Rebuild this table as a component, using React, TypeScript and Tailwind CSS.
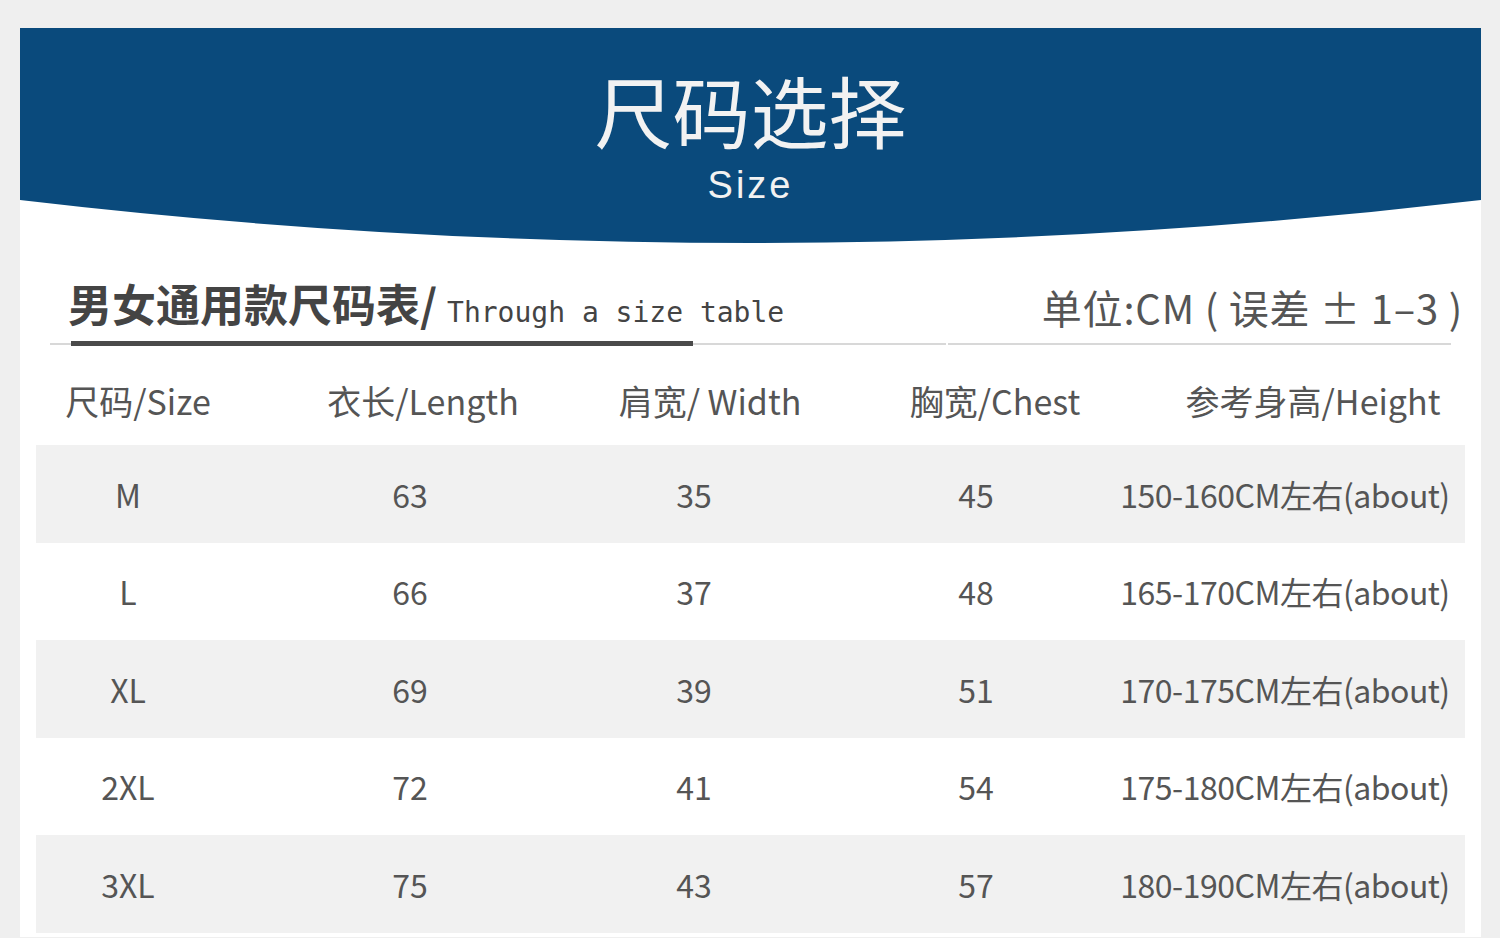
const cjk = "font-['Noto_Sans_CJK_SC',sans-serif]";

const rows = [
  { size: "M", length: "63", width: "35", chest: "45", height: "150-160" },
  { size: "L", length: "66", width: "37", chest: "48", height: "165-170" },
  { size: "XL", length: "69", width: "39", chest: "51", height: "170-175" },
  { size: "2XL", length: "72", width: "41", chest: "54", height: "175-180" },
  { size: "3XL", length: "75", width: "43", chest: "57", height: "180-190" },
];

const dataCols = "grid grid-cols-[184px_380px_188px_376px_242px]";
const headCols = "grid grid-cols-[204px_366px_208px_362px_274px]";

function Banner() {
  return (
    <div className="relative h-[215px]">
      <svg className="absolute inset-0" width="1461" height="215" viewBox="0 0 1461 215">
        <path d="M0 0 H1461 V172 Q730 258 0 172 Z" fill="#0a4a7c" />
      </svg>
      <div className="relative flex flex-col items-center pt-[42px] text-[#f2f2f2]">
        <h1 className={`${cjk} text-[78px] font-normal leading-none`}>尺码选择</h1>
        <p className="mt-[18px] font-['Liberation_Sans',sans-serif] text-[38px] leading-none tracking-[3px]">Size</p>
      </div>
    </div>
  );
}

function TableHeading() {
  return (
    <div className="pt-[38px]">
      <div className="flex items-end justify-between pl-[48px] pr-[18px]">
        <div className="flex items-baseline text-[#444]">
          <span className={`${cjk} text-[44px] font-bold leading-none`}>男女通用款尺码表/</span>
          <span className="ml-[10px] font-['DejaVu_Sans_Mono',monospace] text-[28px] leading-none">Through a size table</span>
        </div>
        <span className={`${cjk} text-[40px] leading-none tracking-[0.8px] text-[#555]`}>单位:CM ( 误差 ± 1–3 )</span>
      </div>
      <div className="mt-[16px] flex items-center px-[30px]">
        <div className="relative h-[2px] w-[900px] bg-[#d8d8d8]">
          <div className="absolute left-[21px] top-[-2px] h-[5px] w-[622px] bg-[#4a4a4a]" />
        </div>
        <div className="ml-[2px] h-[2px] w-[506px] bg-[#d8d8d8]" />
      </div>
    </div>
  );
}

export default function App() {
  return (
    <div className="min-h-[938px] bg-[#efefef] pt-[28px]">
      <div className="ml-[20px] w-[1461px] bg-white pb-[4px]">
        <Banner />
        <TableHeading />
        <div className="px-[16px]">
          <div className={`${headCols} ${cjk} h-[100px] items-center pt-[10px] text-center text-[34px] text-[#555]`}>
            <span>尺码/Size</span>
            <span>衣长/Length</span>
            <span>肩宽/ Width</span>
            <span>胸宽/Chest</span>
            <span>参考身高/Height</span>
          </div>
          {rows.map((r, i) => (
            <div
              key={r.size}
              className={`${dataCols} ${cjk} h-[97.5px] items-center text-center text-[32px] text-[#555] ${i % 2 === 0 ? "bg-[#f1f1f1]" : "bg-white"}`}
            >
              <span>{r.size}</span>
              <span>{r.length}</span>
              <span>{r.width}</span>
              <span>{r.chest}</span>
              <span className="justify-self-center whitespace-nowrap tracking-[-0.5px]">{r.height}CM左右(about)</span>
            </div>
          ))}
        </div>
      </div>
    </div>
  );
}
